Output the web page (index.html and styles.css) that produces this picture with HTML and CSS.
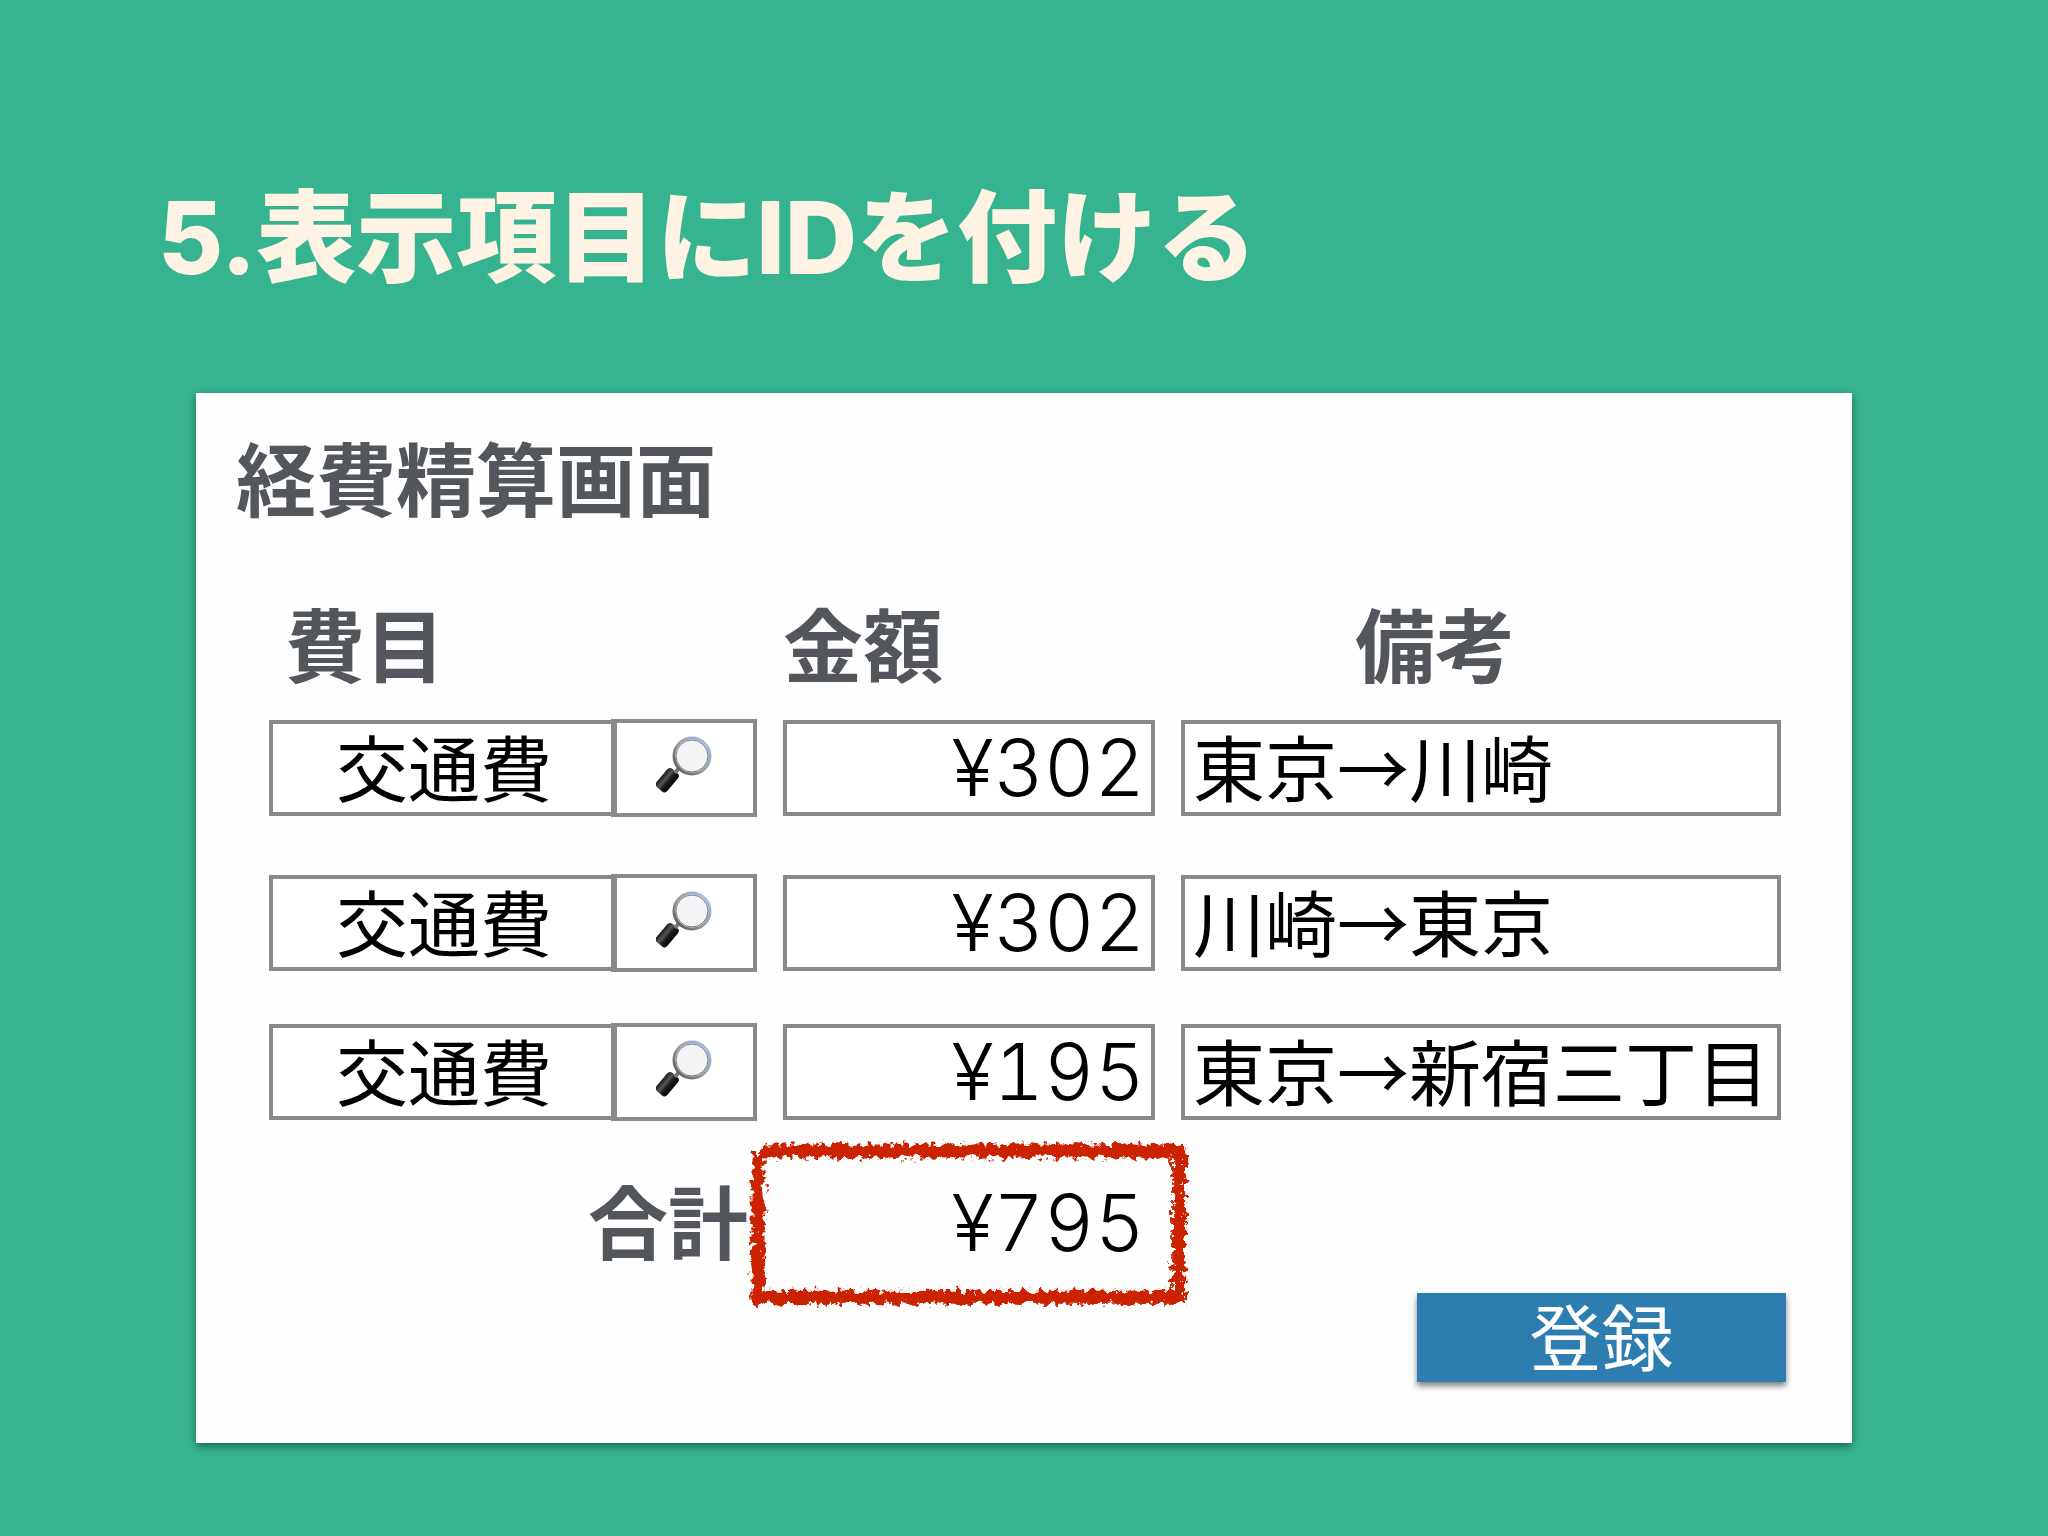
FILE: index.html
```html
<!DOCTYPE html>
<html lang="ja">
<head>
    <meta charset="UTF-8">
    <meta name="viewport" content="width=device-width, initial-scale=1.0">
    <title>経費精算画面</title>
    <link rel="stylesheet" href="styles.css">
</head>
<body>
    <!-- アイコンとフィルターの定義 -->
    <svg class="defs" width="0" height="0" aria-hidden="true">
        <defs>
            <linearGradient id="rim" x1="0" y1="1" x2="1" y2="0">
                <stop offset="0" stop-color="#4c4c4c"/>
                <stop offset="0.45" stop-color="#9a9a9c"/>
                <stop offset="0.8" stop-color="#9db4da"/>
                <stop offset="1" stop-color="#c4dcf6"/>
            </linearGradient>
            <linearGradient id="rim-inner" x1="0" y1="0" x2="1" y2="1">
                <stop offset="0" stop-color="#8a8a8c"/>
                <stop offset="1" stop-color="#6c6c6e"/>
            </linearGradient>
            <linearGradient id="grip" x1="0" y1="0" x2="1" y2="0">
                <stop offset="0" stop-color="#17181a"/>
                <stop offset="0.35" stop-color="#55575a"/>
                <stop offset="0.6" stop-color="#1c1d1f"/>
                <stop offset="1" stop-color="#050506"/>
            </linearGradient>
            <filter id="crayon" filterUnits="userSpaceOnUse" x="-20" y="-20" width="1200" height="400">
                <feTurbulence type="fractalNoise" baseFrequency="0.17" numOctaves="3" seed="4" result="noise"/>
                <feDisplacementMap in="SourceGraphic" in2="noise" scale="15" xChannelSelector="R" yChannelSelector="G"/>
            </filter>
            <symbol id="search" viewBox="0 0 58 58">
                <rect x="-7" y="0" width="14" height="24" rx="4" fill="url(#grip)" transform="translate(19 36) rotate(40)"/>
                <path d="M19 38l4-5" stroke="#77787a" stroke-width="4"/>
                <circle cx="36" cy="21" r="18" fill="#f5f5f7" stroke="url(#rim)" stroke-width="3"/>
                <circle cx="36" cy="21" r="16" fill="none" stroke="url(#rim-inner)" stroke-width="1"/>
            </symbol>
        </defs>
    </svg>

    <h1 class="title">5.表示項目にIDを付ける</h1>

    <form class="card">
        <h2 class="card-title">経費精算画面</h2>
        <table class="expenses">
            <thead>
                <tr>
                    <th class="head-item" scope="col">費目</th>
                    <th class="head-amount" scope="col">金額</th>
                    <th class="head-note" scope="col">備考</th>
                </tr>
            </thead>
            <tbody>
                <tr class="first">
                    <td class="item">
                        <input class="field" type="text" value="交通費" aria-label="費目">
                        <button class="search" type="button" aria-label="検索"><svg class="icon"><use href="#search"/></svg></button>
                    </td>
                    <td><input class="field amount" type="text" value="¥302" aria-label="金額"></td>
                    <td><input class="field note" type="text" value="東京→川崎" aria-label="備考"></td>
                </tr>
                <tr>
                    <td class="item">
                        <input class="field" type="text" value="交通費" aria-label="費目">
                        <button class="search" type="button" aria-label="検索"><svg class="icon"><use href="#search"/></svg></button>
                    </td>
                    <td><input class="field amount" type="text" value="¥302" aria-label="金額"></td>
                    <td><input class="field note" type="text" value="川崎→東京" aria-label="備考"></td>
                </tr>
                <tr>
                    <td class="item">
                        <input class="field" type="text" value="交通費" aria-label="費目">
                        <button class="search" type="button" aria-label="検索"><svg class="icon"><use href="#search"/></svg></button>
                    </td>
                    <td><input class="field amount" type="text" value="¥195" aria-label="金額"></td>
                    <td><input class="field note" type="text" value="東京→新宿三丁目" aria-label="備考"></td>
                </tr>
            </tbody>
            <tfoot>
                <tr>
                    <th class="total-label" scope="row">合計</th>
                    <td class="total">
                        ¥795
                        <svg class="mark" aria-hidden="true">
                            <g filter="url(#crayon)">
                                <line x1="12" y1="9" x2="100%" y2="9"/>
                                <line x1="9" y1="10" x2="9" y2="100%"/>
                                <line x1="99%" y1="4" x2="99%" y2="100%"/>
                                <line x1="4" y1="97%" x2="100%" y2="97%"/>
                            </g>
                        </svg>
                    </td>
                </tr>
            </tfoot>
        </table>
        <div class="actions">
            <button class="submit" type="submit">登録</button>
        </div>
    </form>
</body>
</html>
```

FILE: styles.css
```css
:root {
    --green: #36b38f;
    --cream: #fff4e4;
    --gray: #53565b;
    --line: #88898b;
    --blue: #2e7db0;
    --red: #cb2402;
}
* {
    box-sizing: border-box;
}
body {
    margin: 0;
    background: var(--green);
    font-family: "Noto Sans CJK JP", sans-serif;
}
.defs {
    position: absolute;
}
.title {
    margin: 0;
    padding: 170px 158px 0;
    font-family: Inter, "Noto Sans CJK JP", sans-serif;
    font-size: 100px;
    font-weight: 800;
    line-height: 136px;
    color: var(--cream);
}
.card {
    margin: 87px 196px 80px;
    padding: 22px 66px 61px 73px;
    background: #fefefe;
    box-shadow: 0 3px 8px rgba(0, 0, 0, 0.45);
}
.card-title {
    margin: 0 0 46px -33px;
    font-size: 80px;
    font-weight: 700;
    line-height: 120px;
    color: var(--gray);
}

/* 明細 */
.expenses {
    display: block;
    margin-right: 5px;
}
.expenses thead,
.expenses tbody,
.expenses tfoot {
    display: block;
}
.expenses tr {
    display: grid;
    grid-template-columns: 488fr 372fr 600fr;
    column-gap: 26px;
    padding-bottom: 53px;
}
.expenses .first {
    padding-bottom: 59px;
}
.expenses thead tr {
    padding-bottom: 19px;
}
.expenses tfoot tr {
    height: 120px;
    padding-bottom: 0;
}
.expenses th,
.expenses td {
    padding: 0;
    min-width: 0;
}
.expenses th {
    font-size: 80px;
    font-weight: 700;
    line-height: 120px;
    text-align: left;
    color: var(--gray);
}
.expenses .head-item {
    padding-left: 16px;
}
.expenses .head-note {
    padding-right: 92px;
    text-align: center;
}
.item {
    display: flex;
    align-items: center;
}
.field {
    display: block;
    width: 100%;
    min-width: 0;
    height: 96px;
    padding: 0 8px 8px;
    border: 4px solid var(--line);
    border-radius: 0;
    background: #fff;
    font-family: "Noto Sans CJK JP", sans-serif;
    font-size: 72px;
    font-weight: 400;
    color: #000;
}
.item .field {
    flex: 1;
    padding-left: 12px;
    border-right: 0;
    text-align: center;
}
.search {
    display: flex;
    align-items: center;
    justify-content: center;
    width: 146px;
    height: 98px;
    margin: -1px 0;
    padding: 0 0 8px;
    border: 4px solid var(--line);
    border-left-width: 6px;
    background: #fff;
}
.icon {
    width: 58px;
    height: 58px;
}
.field.amount,
.total {
    font-family: Inter, "Noto Sans CJK JP", sans-serif;
    font-size: 78px;
    font-weight: 300;
    font-variant-numeric: tabular-nums;
    text-align: right;
}
.field.amount {
    padding: 0 6px 2px;
}

/* 合計 */
.expenses .total-label {
    padding-right: 9px;
    line-height: 90px;
    text-align: right;
}
.expenses .total {
    position: relative;
    padding-right: 10px;
    line-height: 100px;
}
.mark {
    position: absolute;
    top: -31px;
    left: -34px;
    width: calc(100% + 62px);
    height: 160px;
    overflow: visible;
}
.mark line {
    stroke: var(--red);
    stroke-width: 13px;
}

.actions {
    display: flex;
    justify-content: flex-end;
}
.submit {
    width: 369px;
    height: 89px;
    padding: 0 0 8px;
    border: 0;
    background: var(--blue);
    box-shadow: 0 4px 6px rgba(0, 0, 0, 0.5);
    font-family: "Noto Sans CJK JP", sans-serif;
    font-size: 72px;
    font-weight: 400;
    line-height: 80px;
    color: #fff;
}
```
